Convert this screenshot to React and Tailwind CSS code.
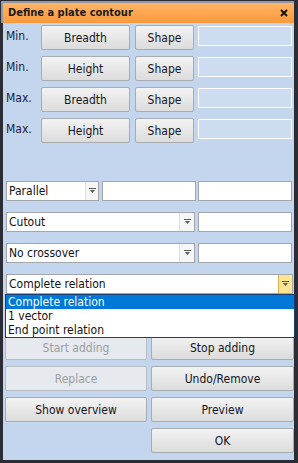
import React from "react";

const font = { fontFamily: '"DejaVu Sans Condensed", "DejaVu Sans", sans-serif' };

function Arrow() {
  return (
    <svg width="7" height="6" viewBox="0 0 7 6">
      <rect x="0" y="0" width="7" height="1" fill="#5a5a5a" />
      <path d="M1 2 H6 L3.5 5 Z" fill="#5a5a5a" />
    </svg>
  );
}

function Btn({ children, w, disabled }) {
  return (
    <div
      className={`flex h-[25px] items-center justify-center rounded-[2px] border text-[12px] ${w} ${
        disabled
          ? "border-[#b8bcc2] bg-[#e6e9ed] text-[#9c9ea2]"
          : "border-[#a8abb0] bg-gradient-to-b from-[#f3f3f3] to-[#dcdcdc] text-[#15151f]"
      }`}
    >
      {children}
    </div>
  );
}

function DisField() {
  return <div className="mt-[1px] h-[20px] w-[94px] border border-white bg-[#cddcf1]" />;
}

function Field({ w }) {
  return <div className={`h-[20px] border border-[#a3a6ab] bg-white ${w}`} />;
}

function Combo({ w, text, active, arrowW }) {
  return (
    <div className={`flex h-[20px] border border-[#a3a6ab] bg-white ${w}`}>
      <div className="flex flex-1 items-center pl-[2px] text-[12px] text-[#111]">{text}</div>
      <div
        className={`flex items-center justify-center ${arrowW} ${
          active ? "border-l border-[#e1b24c] bg-[#fde594]" : "border-l border-[#e0e0e0] bg-[#f6f6f6]"
        }`}
      >
        <Arrow />
      </div>
    </div>
  );
}

function MinRow({ label, btn }) {
  return (
    <div className="flex h-[25px] items-start">
      <div className="w-[38px] pl-[3px] pt-[2px] text-[12px] text-[#1a1a40]">{label}</div>
      <Btn w="w-[89px]">{btn}</Btn>
      <div className="w-[5px]" />
      <Btn w="w-[59px]">Shape</Btn>
      <div className="w-[4px]" />
      <DisField />
    </div>
  );
}

export default function App() {
  return (
    <div className="h-[463px] w-[298px] bg-[#2b2c34] pb-[3px] pl-[1px] pr-[4px] pt-[1px]" style={font}>
      <div className="flex h-[22px] items-center justify-between border-l-2 border-t-2 border-[#9497a0] bg-gradient-to-b from-[#ffb466] to-[#fb9a3c] pl-[5px] pr-[6px]">
        <span className="text-[11px] font-bold text-[#1b1b1b]">Define a plate contour</span>
        <svg width="8" height="8" viewBox="0 0 8 8">
          <path d="M1 1 L7 7 M7 1 L1 7" stroke="#111" strokeWidth="1.8" />
        </svg>
      </div>
      <div className="relative ml-[2px] h-[437px] bg-[#c3d6ed]">
        <div className="flex flex-col gap-[6px] pt-[2px]">
          <MinRow label="Min." btn="Breadth" />
          <MinRow label="Min." btn="Height" />
          <MinRow label="Max." btn="Breadth" />
          <MinRow label="Max." btn="Height" />
        </div>
        <div className="mt-[38px] flex flex-col gap-[11px] pl-[3px]">
          <div className="flex">
            <Combo w="w-[93px]" text="Parallel" arrowW="w-[13px]" />
            <div className="w-[3px]" />
            <Field w="w-[94px]" />
            <div className="w-[2px]" />
            <Field w="w-[94px]" />
          </div>
          <div className="flex">
            <Combo w="w-[189px]" text="Cutout" arrowW="w-[15px]" />
            <div className="w-[3px]" />
            <Field w="w-[94px]" />
          </div>
          <div className="flex">
            <Combo w="w-[189px]" text="No crossover" arrowW="w-[15px]" />
            <div className="w-[3px]" />
            <Field w="w-[94px]" />
          </div>
          <div className="relative flex">
            <Combo w="w-[287px]" text="Complete relation" active arrowW="w-[14px]" />
            <div className="absolute left-[-1px] top-[20px] z-10 w-[290px] border border-[#1c3f73] bg-white text-[12px] text-[#111]">
              <div className="h-[14px] bg-[#0078d7] pl-[2px] leading-[14px] text-white">Complete relation</div>
              <div className="h-[14px] pl-[2px] leading-[14px]">1 vector</div>
              <div className="h-[14px] pl-[2px] leading-[14px]">End point relation</div>
            </div>
          </div>
        </div>
        <div className="mt-[41px] flex flex-col gap-[6px] pl-[2px]">
          <div className="flex gap-[4px]">
            <Btn w="w-[142px]" disabled>Start adding</Btn>
            <Btn w="w-[143px]">Stop adding</Btn>
          </div>
          <div className="flex gap-[4px]">
            <Btn w="w-[142px]" disabled>Replace</Btn>
            <Btn w="w-[143px]">Undo/Remove</Btn>
          </div>
          <div className="flex gap-[4px]">
            <Btn w="w-[142px]">Show overview</Btn>
            <Btn w="w-[143px]">Preview</Btn>
          </div>
          <div className="flex gap-[4px]">
            <div className="w-[142px]" />
            <Btn w="w-[143px]">OK</Btn>
          </div>
        </div>
      </div>
    </div>
  );
}
